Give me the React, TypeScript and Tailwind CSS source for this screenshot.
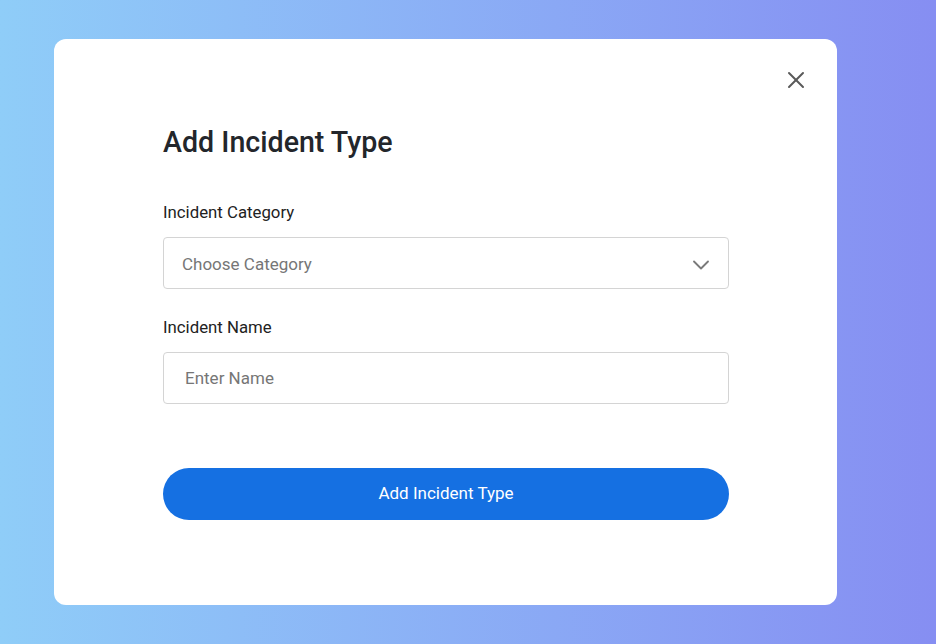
import { X, ChevronDown } from "lucide-react";

export default function App() {
  return (
    <div className="h-[644px] w-full bg-gradient-to-r from-[#8fcdf8] to-[#868ef2] pl-[54px] pt-[39px] font-['Roboto',sans-serif]">
      <div className="relative w-[783px] h-[566px] bg-white rounded-[12px] pl-[109px] pt-[87px]">
        <button className="absolute top-[27px] right-[27px] text-[#5a5a5a] p-0">
          <X size={28} strokeWidth={1.7} />
        </button>

        <div className="w-[566px]">
          <h1 className="text-[28.6px] leading-8 font-medium text-[#23262b]">Add Incident Type</h1>

          <label className="block mt-[42px] text-[16.8px] leading-6 text-[#222]">Incident Category</label>
          <div className="mt-[13px] h-[52px] border border-[#d4d4d4] rounded-[4px] flex items-center justify-between pt-[4px] pl-[18px] pr-[13px]">
            <span className="text-[17px] text-[#767676]">Choose Category</span>
            <ChevronDown size={28} strokeWidth={1.6} className="text-[#7a7a7a]" />
          </div>

          <label className="block mt-[26px] text-[16.8px] leading-6 text-[#222]">Incident Name</label>
          <input
            placeholder="Enter Name"
            className="mt-[13px] block w-full h-[52px] border border-[#d4d4d4] rounded-[4px] px-[21px] text-[17px] text-[#222] placeholder-[#767676] outline-none"
          />

          <button className="mt-[64px] w-full h-[52px] rounded-full bg-[#1570e2] text-white text-[17px]">
            Add Incident Type
          </button>
        </div>
      </div>
    </div>
  );
}
